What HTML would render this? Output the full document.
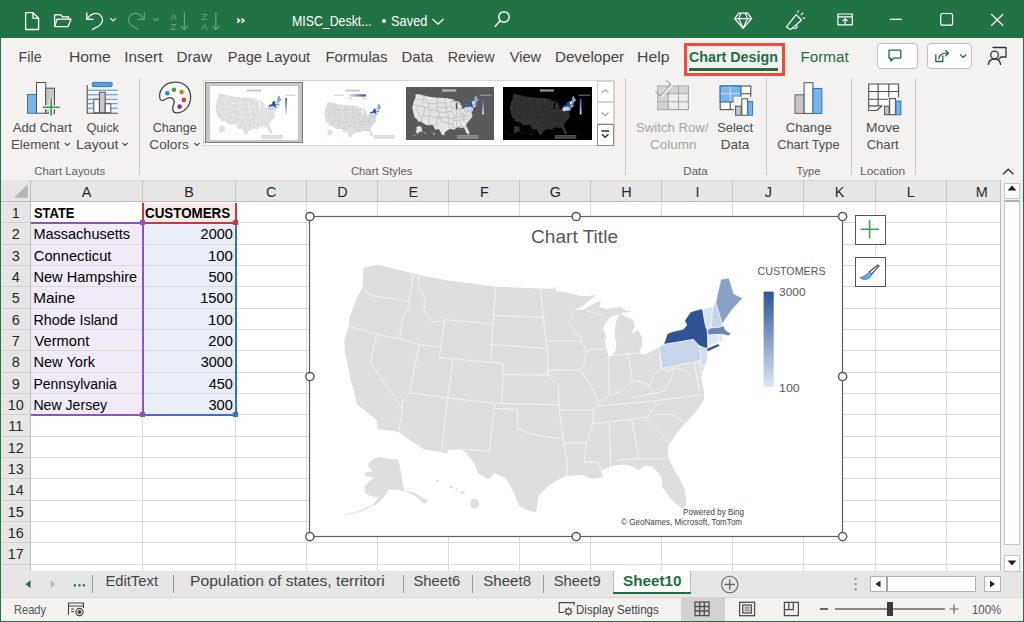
<!DOCTYPE html>
<html><head><meta charset="utf-8"><style>
html,body{margin:0;padding:0;width:1024px;height:622px;overflow:hidden;background:#fff}
body{position:relative;font-family:"Liberation Sans",sans-serif}
.r{position:absolute}
.t{position:absolute;white-space:nowrap;line-height:1;transform-origin:0 0}
</style></head><body>
<div class="r" style="left:0;top:0;width:1024px;height:622px;background:#217346"></div>
<div class="r" style="left:1px;top:38px;width:1022px;height:142px;background:#f3f2f1"></div>
<div class="r" style="left:1px;top:180px;width:1022px;height:391px;background:#fff"></div>
<div class="r" style="left:1px;top:571px;width:1022px;height:26px;background:#e6e6e6"></div>
<div class="r" style="left:1px;top:597px;width:1022px;height:24px;background:#f3f2f1"></div><div class="r" style="left:1px;top:596.8px;width:1022px;height:1px;background:#d6d6d6"></div>

<div class="t" style="left:292.19px;top:15px;font-size:13.8px;font-weight:400;color:#fff;transform:scaleX(0.894);">MISC_Deskt...</div>
<div class="r" style="left:381.5px;top:19px;width:4px;height:4px;border-radius:2px;background:#fff"></div>
<div class="t" style="left:391.12px;top:15px;font-size:13.8px;font-weight:400;color:#fff;transform:scaleX(0.931);">Saved</div>
<div class="t" style="left:18.62px;top:50px;font-size:14.3px;font-weight:400;color:#444;">File</div>
<div class="t" style="left:68.52px;top:49px;font-size:15.5px;font-weight:400;color:#444;transform:scaleX(1.011);">Home</div>
<div class="t" style="left:124.19px;top:49px;font-size:15.3px;font-weight:400;color:#444;">Insert</div>
<div class="t" style="left:176.45px;top:49px;font-size:15.2px;font-weight:400;color:#444;">Draw</div>
<div class="t" style="left:227.69px;top:50px;font-size:14.7px;font-weight:400;color:#444;">Page Layout</div>
<div class="t" style="left:325.38px;top:50px;font-size:14.9px;font-weight:400;color:#444;">Formulas</div>
<div class="t" style="left:401.47px;top:49px;font-size:15.0px;font-weight:400;color:#444;">Data</div>
<div class="t" style="left:447.73px;top:50px;font-size:14.3px;font-weight:400;color:#444;">Review</div>
<div class="t" style="left:509.74px;top:50px;font-size:14.6px;font-weight:400;color:#444;">View</div>
<div class="t" style="left:554.95px;top:49px;font-size:15.2px;font-weight:400;color:#444;">Developer</div>
<div class="t" style="left:637.41px;top:49px;font-size:15.5px;font-weight:400;color:#444;transform:scaleX(1.018);">Help</div>
<div class="t" style="left:688.91px;top:50px;font-size:14.3px;font-weight:700;color:#1e6e42;">Chart Design</div>
<div class="t" style="left:800.55px;top:49px;font-size:15.2px;font-weight:400;color:#1e6e42;">Format</div>
<div class="r" style="left:689px;top:68.3px;width:89px;height:3.2px;background:#1e6e42"></div>
<div class="r" style="left:684px;top:43.2px;width:100.8px;height:32.4px;border:3px solid #ef4b3f;box-sizing:border-box"></div>
<div class="r" style="left:876.8px;top:43.2px;width:41px;height:25.7px;border:1px solid #bdbdbd;border-radius:4px;background:#fff;box-sizing:border-box"></div>
<div class="r" style="left:927.3px;top:43.2px;width:45.2px;height:25.7px;border:1px solid #bdbdbd;border-radius:4px;background:#fff;box-sizing:border-box"></div>
<div class="t" style="left:12.67px;top:121px;font-size:13.2px;font-weight:400;color:#4d4d4d;">Add Chart</div>
<div class="t" style="left:11.01px;top:138px;font-size:13.3px;font-weight:400;color:#4d4d4d;">Element</div>
<div class="t" style="left:86.40px;top:122px;font-size:12.7px;font-weight:400;color:#4d4d4d;">Quick</div>
<div class="t" style="left:75.64px;top:138px;font-size:13.7px;font-weight:400;color:#4d4d4d;transform:scaleX(1.032);">Layout</div>
<div class="t" style="left:152.66px;top:122px;font-size:12.6px;font-weight:400;color:#4d4d4d;">Change</div>
<div class="t" style="left:149.30px;top:138px;font-size:13.7px;font-weight:400;color:#4d4d4d;">Colors</div>
<div class="t" style="left:34.22px;top:166px;font-size:11.4px;font-weight:400;color:#5e5e5e;">Chart Layouts</div>
<div class="t" style="left:350.93px;top:166px;font-size:11.3px;font-weight:400;color:#5e5e5e;">Chart Styles</div>
<div class="t" style="left:636.00px;top:121px;font-size:13.2px;font-weight:400;color:#a6a6a6;">Switch Row/</div>
<div class="t" style="left:650.12px;top:138px;font-size:13.5px;font-weight:400;color:#a6a6a6;">Column</div>
<div class="t" style="left:717.21px;top:122px;font-size:12.9px;font-weight:400;color:#4d4d4d;">Select</div>
<div class="t" style="left:720.68px;top:138px;font-size:13.6px;font-weight:400;color:#4d4d4d;">Data</div>
<div class="t" style="left:683.36px;top:166px;font-size:11.5px;font-weight:400;color:#5e5e5e;">Data</div>
<div class="t" style="left:785.84px;top:121px;font-size:13.1px;font-weight:400;color:#4d4d4d;">Change</div>
<div class="t" style="left:777.15px;top:139px;font-size:12.8px;font-weight:400;color:#4d4d4d;">Chart Type</div>
<div class="t" style="left:796.45px;top:166px;font-size:11.0px;font-weight:400;color:#5e5e5e;">Type</div>
<div class="t" style="left:866.17px;top:121px;font-size:13.7px;font-weight:400;color:#4d4d4d;transform:scaleX(1.007);">Move</div>
<div class="t" style="left:866.64px;top:138px;font-size:13.1px;font-weight:400;color:#4d4d4d;">Chart</div>
<div class="t" style="left:860.42px;top:166px;font-size:11.8px;font-weight:400;color:#5e5e5e;transform:scaleX(1.012);">Location</div>
<div class="r" style="left:138.5px;top:77.5px;width:1px;height:97px;background:#c8c8c8"></div>
<div class="r" style="left:625.1px;top:77.5px;width:1px;height:97px;background:#c8c8c8"></div>
<div class="r" style="left:766.2px;top:77.5px;width:1px;height:97px;background:#c8c8c8"></div>
<div class="r" style="left:851.1px;top:77.5px;width:1px;height:97px;background:#c8c8c8"></div>
<div class="r" style="left:914.5px;top:77.5px;width:1px;height:97px;background:#c8c8c8"></div>
<div class="r" style="left:203.2px;top:80.3px;width:412px;height:66.2px;background:#fff;border:1px solid #d4d4d4;box-sizing:border-box"></div>
<div class="r" style="left:205.4px;top:82px;width:97.4px;height:61.3px;background:#c6c6c6;border:1px solid #7a7a7a;box-sizing:border-box"></div>
<div class="r" style="left:209.7px;top:85.7px;width:88.8px;height:54.3px;background:#fff"></div>
<div class="r" style="left:405.6px;top:86.6px;width:88.8px;height:53.2px;background:#595959"></div>
<div class="r" style="left:503.3px;top:86.6px;width:88.4px;height:53.2px;background:#000"></div>
<div class="r" style="left:597.3px;top:80.6px;width:16.7px;height:21.6px;border:1px solid #d4d4d4;box-sizing:border-box;background:#fff"></div>
<div class="r" style="left:597.3px;top:102px;width:16.7px;height:22px;border:1px solid #d4d4d4;box-sizing:border-box;background:#fff"></div>
<div class="r" style="left:597.3px;top:124px;width:16.7px;height:22.4px;border:1px solid #8a8a8a;box-sizing:border-box;background:#fff"></div>
<div class="r" style="left:1px;top:180px;width:1022px;height:21.5px;background:linear-gradient(#d8d8d8,#e6e6e6 2px,#e6e6e6)"></div>
<div class="r" style="left:1px;top:180px;width:29.5px;height:391px;background:#e6e6e6"></div>
<div class="r" style="left:30.5px;top:222.33px;width:970px;height:1px;background:#dadada"></div>
<div class="r" style="left:1px;top:222.33px;width:29.5px;height:1px;background:#d0d0d0"></div>
<div class="r" style="left:30.5px;top:243.67px;width:970px;height:1px;background:#dadada"></div>
<div class="r" style="left:1px;top:243.67px;width:29.5px;height:1px;background:#d0d0d0"></div>
<div class="r" style="left:30.5px;top:265.00px;width:970px;height:1px;background:#dadada"></div>
<div class="r" style="left:1px;top:265.00px;width:29.5px;height:1px;background:#d0d0d0"></div>
<div class="r" style="left:30.5px;top:286.33px;width:970px;height:1px;background:#dadada"></div>
<div class="r" style="left:1px;top:286.33px;width:29.5px;height:1px;background:#d0d0d0"></div>
<div class="r" style="left:30.5px;top:307.66px;width:970px;height:1px;background:#dadada"></div>
<div class="r" style="left:1px;top:307.66px;width:29.5px;height:1px;background:#d0d0d0"></div>
<div class="r" style="left:30.5px;top:329.00px;width:970px;height:1px;background:#dadada"></div>
<div class="r" style="left:1px;top:329.00px;width:29.5px;height:1px;background:#d0d0d0"></div>
<div class="r" style="left:30.5px;top:350.33px;width:970px;height:1px;background:#dadada"></div>
<div class="r" style="left:1px;top:350.33px;width:29.5px;height:1px;background:#d0d0d0"></div>
<div class="r" style="left:30.5px;top:371.66px;width:970px;height:1px;background:#dadada"></div>
<div class="r" style="left:1px;top:371.66px;width:29.5px;height:1px;background:#d0d0d0"></div>
<div class="r" style="left:30.5px;top:393.00px;width:970px;height:1px;background:#dadada"></div>
<div class="r" style="left:1px;top:393.00px;width:29.5px;height:1px;background:#d0d0d0"></div>
<div class="r" style="left:30.5px;top:414.33px;width:970px;height:1px;background:#dadada"></div>
<div class="r" style="left:1px;top:414.33px;width:29.5px;height:1px;background:#d0d0d0"></div>
<div class="r" style="left:30.5px;top:435.66px;width:970px;height:1px;background:#dadada"></div>
<div class="r" style="left:1px;top:435.66px;width:29.5px;height:1px;background:#d0d0d0"></div>
<div class="r" style="left:30.5px;top:457.00px;width:970px;height:1px;background:#dadada"></div>
<div class="r" style="left:1px;top:457.00px;width:29.5px;height:1px;background:#d0d0d0"></div>
<div class="r" style="left:30.5px;top:478.33px;width:970px;height:1px;background:#dadada"></div>
<div class="r" style="left:1px;top:478.33px;width:29.5px;height:1px;background:#d0d0d0"></div>
<div class="r" style="left:30.5px;top:499.66px;width:970px;height:1px;background:#dadada"></div>
<div class="r" style="left:1px;top:499.66px;width:29.5px;height:1px;background:#d0d0d0"></div>
<div class="r" style="left:30.5px;top:521.00px;width:970px;height:1px;background:#dadada"></div>
<div class="r" style="left:1px;top:521.00px;width:29.5px;height:1px;background:#d0d0d0"></div>
<div class="r" style="left:30.5px;top:542.33px;width:970px;height:1px;background:#dadada"></div>
<div class="r" style="left:1px;top:542.33px;width:29.5px;height:1px;background:#d0d0d0"></div>
<div class="r" style="left:30.5px;top:563.66px;width:970px;height:1px;background:#dadada"></div>
<div class="r" style="left:1px;top:563.66px;width:29.5px;height:1px;background:#d0d0d0"></div>
<div class="r" style="left:142.00px;top:201.5px;width:1px;height:370px;background:#dadada"></div>
<div class="r" style="left:142.00px;top:180px;width:1px;height:21.5px;background:#c6c6c6"></div>
<div class="r" style="left:235.00px;top:201.5px;width:1px;height:370px;background:#dadada"></div>
<div class="r" style="left:235.00px;top:180px;width:1px;height:21.5px;background:#c6c6c6"></div>
<div class="r" style="left:306.30px;top:201.5px;width:1px;height:370px;background:#dadada"></div>
<div class="r" style="left:306.30px;top:180px;width:1px;height:21.5px;background:#c6c6c6"></div>
<div class="r" style="left:377.40px;top:201.5px;width:1px;height:370px;background:#dadada"></div>
<div class="r" style="left:377.40px;top:180px;width:1px;height:21.5px;background:#c6c6c6"></div>
<div class="r" style="left:448.40px;top:201.5px;width:1px;height:370px;background:#dadada"></div>
<div class="r" style="left:448.40px;top:180px;width:1px;height:21.5px;background:#c6c6c6"></div>
<div class="r" style="left:519.40px;top:201.5px;width:1px;height:370px;background:#dadada"></div>
<div class="r" style="left:519.40px;top:180px;width:1px;height:21.5px;background:#c6c6c6"></div>
<div class="r" style="left:590.40px;top:201.5px;width:1px;height:370px;background:#dadada"></div>
<div class="r" style="left:590.40px;top:180px;width:1px;height:21.5px;background:#c6c6c6"></div>
<div class="r" style="left:661.40px;top:201.5px;width:1px;height:370px;background:#dadada"></div>
<div class="r" style="left:661.40px;top:180px;width:1px;height:21.5px;background:#c6c6c6"></div>
<div class="r" style="left:732.40px;top:201.5px;width:1px;height:370px;background:#dadada"></div>
<div class="r" style="left:732.40px;top:180px;width:1px;height:21.5px;background:#c6c6c6"></div>
<div class="r" style="left:803.40px;top:201.5px;width:1px;height:370px;background:#dadada"></div>
<div class="r" style="left:803.40px;top:180px;width:1px;height:21.5px;background:#c6c6c6"></div>
<div class="r" style="left:874.90px;top:201.5px;width:1px;height:370px;background:#dadada"></div>
<div class="r" style="left:874.90px;top:180px;width:1px;height:21.5px;background:#c6c6c6"></div>
<div class="r" style="left:945.80px;top:201.5px;width:1px;height:370px;background:#dadada"></div>
<div class="r" style="left:945.80px;top:180px;width:1px;height:21.5px;background:#c6c6c6"></div>
<div class="r" style="left:1px;top:201px;width:1000px;height:1px;background:#bdbdbd"></div>
<div class="r" style="left:30px;top:180px;width:1px;height:391px;background:#bdbdbd"></div>
<div class="r" style="left:1000.2px;top:180px;width:1px;height:391px;background:#bdbdbd"></div>
<div class="r" style="left:1px;top:570.8px;width:1000px;height:1px;background:#b4b4b4"></div>
<svg class="r" style="left:0;top:0" width="1024" height="622"><polygon points="27.8,184.2 27.8,197.7 13.9,197.7" fill="#b4b4b4"/></svg>
<div class="t" style="left:30.5px;width:112.0px;top:185px;font-size:14.4px;text-align:center;color:#262626">A</div>
<div class="t" style="left:142.5px;width:93.0px;top:185px;font-size:14.4px;text-align:center;color:#262626">B</div>
<div class="t" style="left:235.5px;width:71.3px;top:185px;font-size:14.4px;text-align:center;color:#262626">C</div>
<div class="t" style="left:306.8px;width:71.1px;top:185px;font-size:14.4px;text-align:center;color:#262626">D</div>
<div class="t" style="left:377.9px;width:71.0px;top:185px;font-size:14.4px;text-align:center;color:#262626">E</div>
<div class="t" style="left:448.9px;width:71.0px;top:185px;font-size:14.4px;text-align:center;color:#262626">F</div>
<div class="t" style="left:519.9px;width:71.0px;top:185px;font-size:14.4px;text-align:center;color:#262626">G</div>
<div class="t" style="left:590.9px;width:71.0px;top:185px;font-size:14.4px;text-align:center;color:#262626">H</div>
<div class="t" style="left:661.9px;width:71.0px;top:185px;font-size:14.4px;text-align:center;color:#262626">I</div>
<div class="t" style="left:732.9px;width:71.0px;top:185px;font-size:14.4px;text-align:center;color:#262626">J</div>
<div class="t" style="left:803.9px;width:71.5px;top:185px;font-size:14.4px;text-align:center;color:#262626">K</div>
<div class="t" style="left:875.4px;width:70.9px;top:185px;font-size:14.4px;text-align:center;color:#262626">L</div>
<div class="t" style="left:946.3px;width:70.7px;top:185px;font-size:14.4px;text-align:center;color:#262626">M</div>
<div class="t" style="left:1px;width:29.5px;top:206px;font-size:14.4px;text-align:center;color:#262626">1</div>
<div class="t" style="left:1px;width:29.5px;top:227px;font-size:14.4px;text-align:center;color:#262626">2</div>
<div class="t" style="left:1px;width:29.5px;top:249px;font-size:14.4px;text-align:center;color:#262626">3</div>
<div class="t" style="left:1px;width:29.5px;top:270px;font-size:14.4px;text-align:center;color:#262626">4</div>
<div class="t" style="left:1px;width:29.5px;top:291px;font-size:14.4px;text-align:center;color:#262626">5</div>
<div class="t" style="left:1px;width:29.5px;top:313px;font-size:14.4px;text-align:center;color:#262626">6</div>
<div class="t" style="left:1px;width:29.5px;top:334px;font-size:14.4px;text-align:center;color:#262626">7</div>
<div class="t" style="left:1px;width:29.5px;top:355px;font-size:14.4px;text-align:center;color:#262626">8</div>
<div class="t" style="left:1px;width:29.5px;top:377px;font-size:14.4px;text-align:center;color:#262626">9</div>
<div class="t" style="left:1px;width:29.5px;top:398px;font-size:14.4px;text-align:center;color:#262626">10</div>
<div class="t" style="left:1px;width:29.5px;top:419px;font-size:14.4px;text-align:center;color:#262626">11</div>
<div class="t" style="left:1px;width:29.5px;top:441px;font-size:14.4px;text-align:center;color:#262626">12</div>
<div class="t" style="left:1px;width:29.5px;top:462px;font-size:14.4px;text-align:center;color:#262626">13</div>
<div class="t" style="left:1px;width:29.5px;top:483px;font-size:14.4px;text-align:center;color:#262626">14</div>
<div class="t" style="left:1px;width:29.5px;top:505px;font-size:14.4px;text-align:center;color:#262626">15</div>
<div class="t" style="left:1px;width:29.5px;top:526px;font-size:14.4px;text-align:center;color:#262626">16</div>
<div class="t" style="left:1px;width:29.5px;top:547px;font-size:14.4px;text-align:center;color:#262626">17</div>
<div class="t" style="left:1px;width:29.5px;top:569px;font-size:14.4px;text-align:center;color:#262626">18</div>
<div class="r" style="left:143px;top:202.5px;width:92.5px;height:20px;background:#f9eaea"></div>
<div class="r" style="left:31px;top:222.5px;width:111.5px;height:192.0px;background:#f0ebf7"></div>
<div class="r" style="left:143px;top:222.5px;width:92.5px;height:192.0px;background:#e9eef8"></div>
<div class="r" style="left:30.5px;top:243.67px;width:205px;height:1px;background:#dadada"></div>
<div class="r" style="left:30.5px;top:265.00px;width:205px;height:1px;background:#dadada"></div>
<div class="r" style="left:30.5px;top:286.33px;width:205px;height:1px;background:#dadada"></div>
<div class="r" style="left:30.5px;top:307.66px;width:205px;height:1px;background:#dadada"></div>
<div class="r" style="left:30.5px;top:329.00px;width:205px;height:1px;background:#dadada"></div>
<div class="r" style="left:30.5px;top:350.33px;width:205px;height:1px;background:#dadada"></div>
<div class="r" style="left:30.5px;top:371.66px;width:205px;height:1px;background:#dadada"></div>
<div class="r" style="left:30.5px;top:393.00px;width:205px;height:1px;background:#dadada"></div>
<div class="t" style="left:33.53px;top:207px;font-size:13.8px;font-weight:700;color:#000;transform:scaleX(0.935);">STATE</div>
<div class="t" style="left:145.45px;top:207px;font-size:13.8px;font-weight:700;color:#000;transform:scaleX(0.969);">CUSTOMERS</div>
<div class="t" style="left:33.41px;top:227px;font-size:14.5px;font-weight:400;color:#000;">Massachusetts</div>
<div class="t" style="left:200.57px;top:227px;font-size:14.5px;font-weight:400;color:#000;">2000</div>
<div class="t" style="left:33.85px;top:249px;font-size:14.7px;font-weight:400;color:#000;">Connecticut</div>
<div class="t" style="left:207.91px;top:248px;font-size:15.0px;font-weight:400;color:#000;">100</div>
<div class="t" style="left:33.40px;top:270px;font-size:14.6px;font-weight:400;color:#000;">New Hampshire</div>
<div class="t" style="left:208.46px;top:270px;font-size:14.6px;font-weight:400;color:#000;">500</div>
<div class="t" style="left:33.34px;top:290px;font-size:15.3px;font-weight:400;color:#000;">Maine</div>
<div class="t" style="left:200.18px;top:291px;font-size:14.7px;font-weight:400;color:#000;">1500</div>
<div class="t" style="left:33.43px;top:313px;font-size:14.3px;font-weight:400;color:#000;">Rhode Island</div>
<div class="t" style="left:207.91px;top:312px;font-size:15.0px;font-weight:400;color:#000;">100</div>
<div class="t" style="left:34.54px;top:334px;font-size:14.7px;font-weight:400;color:#000;">Vermont</div>
<div class="t" style="left:208.31px;top:334px;font-size:14.7px;font-weight:400;color:#000;">200</div>
<div class="t" style="left:33.40px;top:355px;font-size:14.6px;font-weight:400;color:#000;">New York</div>
<div class="t" style="left:200.75px;top:355px;font-size:14.4px;font-weight:400;color:#000;">3000</div>
<div class="t" style="left:33.45px;top:377px;font-size:14.0px;font-weight:400;color:#000;">Pennsylvania</div>
<div class="t" style="left:208.72px;top:377px;font-size:14.5px;font-weight:400;color:#000;">450</div>
<div class="t" style="left:33.44px;top:398px;font-size:14.1px;font-weight:400;color:#000;">New Jersey</div>
<div class="t" style="left:208.49px;top:398px;font-size:14.6px;font-weight:400;color:#000;">300</div>
<div class="r" style="left:141.5px;top:202.5px;width:2px;height:21.3px;background:#c53a3f"></div>
<div class="r" style="left:234.7px;top:202.5px;width:2px;height:21.3px;background:#c53a3f"></div>
<div class="r" style="left:143px;top:221.8px;width:92px;height:2px;background:#c53a3f"></div>
<div class="r" style="left:31px;top:221.8px;width:111px;height:2px;background:#8855c4"></div>
<div class="r" style="left:31px;top:413.8px;width:111px;height:2px;background:#8855c4"></div>
<div class="r" style="left:141.5px;top:222.8px;width:2px;height:192.0px;background:#8855c4"></div>
<div class="r" style="left:143.5px;top:413.8px;width:92px;height:2px;background:#3a6fd0"></div>
<div class="r" style="left:234.7px;top:223.8px;width:2px;height:192.0px;background:#3a6fd0"></div>
<div class="r" style="left:140.0px;top:220.3px;width:5px;height:5px;background:#8855c4"></div>
<div class="r" style="left:233.2px;top:220.3px;width:5px;height:5px;background:#c53a3f"></div>
<div class="r" style="left:140.0px;top:412.3px;width:5px;height:5px;background:#8855c4"></div>
<div class="r" style="left:233.2px;top:412.3px;width:5px;height:5px;background:#3a6fd0"></div>
<div class="r" style="left:1001px;top:180px;width:21px;height:391px;background:#f0f0f0"></div>
<div class="r" style="left:1003.9px;top:182.5px;width:16.1px;height:16.1px;background:#fff;border:1px solid #c8c8c8;box-sizing:border-box"></div>
<div class="r" style="left:1003.9px;top:199.5px;width:16.1px;height:345px;background:#fff;border:1px solid #c8c8c8;border-top:2px solid #b0b0b0;box-sizing:border-box"></div>
<div class="r" style="left:1003.5px;top:555px;width:16.5px;height:16.7px;background:#fff;border:1px solid #c8c8c8;box-sizing:border-box"></div>
<div class="r" style="left:309.5px;top:216.5px;width:533px;height:320px;background:#fff"></div>
<svg class="r" style="left:0;top:0" width="1024" height="622" viewBox="0 0 1024 622"><defs><path id="us48" d="M363.4,267.5 L377.6,264.4 L413.1,273.6 L444.5,280.1 L495.7,286.8 L540.0,288.4 L554.0,288.8 L555.0,285.7 L556.1,290.9 L565.0,292.2 L570.1,292.9 L580.4,296.1 L588.1,296.1 L595.8,295.2 L589.4,300.6 L581.7,307.0 L573.4,310.2 L583.0,309.6 L586.9,307.6 L597.1,301.9 L601.0,301.2 L599.1,307.0 L606.1,308.9 L620.3,307.0 L626.7,310.8 L631.8,311.5 L631.8,312.1 L622.8,312.8 L616.4,315.3 L610.0,317.3 L606.1,322.4 L602.9,328.8 L604.8,331.4 L606.1,336.6 L604.8,341.7 L607.4,352.0 L608.7,357.1 L615.1,352.0 L616.4,344.3 L614.5,334.0 L615.8,322.4 L619.0,314.7 L621.6,314.1 L624.1,316.0 L633.1,319.8 L635.0,326.3 L631.8,334.0 L638.3,330.1 L642.1,337.8 L642.1,345.6 L638.3,353.3 L644.7,354.6 L655.0,349.4 L658.8,346.8 L663.7,344.5 L667.4,333.7 L673.2,331.5 L683.3,329.3 L686.9,325.0 L684.7,320.7 L690.5,312.0 L700.7,309.1 L702.8,308.8 L713.0,306.9 L715.8,302.6 L720.9,279.4 L728.9,278.0 L733.9,293.9 L742.6,298.2 L732.5,309.1 L725.3,319.2 L722.4,324.3 L723.8,325.7 L725.3,330.1 L731.0,333.7 L728.9,335.8 L722.4,334.6 L722.4,340.9 L718.7,342.4 L707.9,346.0 L707.2,348.9 L707.6,359.0 L704.0,366.9 L701.1,377.8 L704.0,390.8 L703.9,400.0 L696.5,411.1 L685.5,423.1 L679.0,430.0 L674.4,437.0 L668.8,444.4 L667.9,453.6 L669.7,461.0 L676.2,473.9 L679.0,477.6 L684.5,488.7 L686.4,499.8 L685.5,506.3 L681.8,508.1 L674.4,502.6 L668.8,496.1 L662.3,486.9 L661.4,477.6 L657.7,472.1 L652.2,466.5 L644.8,465.6 L638.3,470.2 L630.0,465.6 L622.0,464.4 L613.6,465.5 L601.0,470.7 L603.1,477.0 L592.7,479.0 L582.2,474.9 L566.6,475.9 L557.2,480.1 L546.7,487.4 L538.4,495.8 L536.3,510.4 L535.3,512.3 L527.0,510.0 L519.7,506.4 L513.5,492.0 L505.1,477.4 L494.6,473.2 L488.4,479.5 L477.9,473.2 L473.8,462.8 L465.4,452.3 L461.2,449.2 L447.6,450.2 L447.6,453.4 L423.6,449.2 L397.5,431.4 L377.6,429.3 L376.6,419.9 L367.2,412.6 L356.7,404.3 L354.6,393.8 L349.4,375.0 L348.4,367.9 L345.2,353.2 L344.2,340.7 L348.8,326.0 L349.4,317.7 L356.0,300.0 L362.6,287.4Z"/><path id="ak" d="M368.1,464.1 L373.2,459.0 L380.5,456.7 L388.4,459.0 L398.5,459.6 L404.1,489.9 L407.5,491.6 L414.2,492.7 L427.7,500.6 L424.4,504.0 L414.2,495.0 L405.2,491.6 L396.2,489.4 L392.9,489.9 L389.5,489.4 L387.2,492.7 L382.7,498.4 L377.1,504.0 L365.9,509.6 L353.5,514.1 L342.2,514.7 L355.7,512.4 L372.6,505.1 L378.8,497.2 L370.4,496.1 L365.3,492.7 L364.7,486.0 L368.1,482.6 L373.7,477.6 L364.7,475.9 L364.7,472.5 L372.6,471.4 L368.1,465.7Z"/><g id="hi"><ellipse cx="437.7" cy="481" rx="1.4" ry="1.0"/><ellipse cx="451.3" cy="486.9" rx="1.8" ry="1.2"/><ellipse cx="456.5" cy="489.2" rx="1.3" ry="0.9"/><ellipse cx="462.5" cy="492.5" rx="2.4" ry="1.3"/><ellipse cx="474.6" cy="503.8" rx="4.4" ry="5.0"/></g><g id="bd" fill="none"><polyline points="363.0,287.4 370.3,295.8 394.3,298.5 409.0,302.0"/><polyline points="413.1,273.6 409.0,302.0"/><polyline points="409.0,302.0 410.0,306.2 402.7,316.7 399.6,338.6"/><polyline points="419.4,274.9 417.7,284.3 425.7,300.0 423.6,309.3 432.0,321.9 444.5,320.8"/><polyline points="348.8,326.0 376.6,334.4 399.6,338.6 419.4,344.4 439.3,347.0"/><polyline points="444.5,319.5 439.3,357.4"/><polyline points="444.5,319.5 492.6,324.0"/><polyline points="495.7,286.8 490.5,362.6"/><polyline points="493.6,315.6 540.0,317.3 545.0,317.6"/><polyline points="490.5,344.4 540.0,348.0 547.5,349.0"/><polyline points="439.3,357.4 504.0,363.7"/><polyline points="503.0,363.7 502.0,404.0"/><polyline points="503.0,374.5 551.0,375.0"/><polyline points="376.6,334.4 370.3,362.6 385.0,383.5 402.2,408.4"/><polyline points="410.0,392.8 402.7,400.1 401.7,416.8 398.5,430.4"/><polyline points="419.4,344.4 411.0,384.6 410.0,392.8"/><polyline points="410.0,392.8 447.6,398.0"/><polyline points="452.9,359.5 449.7,384.6 447.6,398.0"/><polyline points="447.6,398.0 441.4,452.3"/><polyline points="447.6,398.0 494.6,403.2 539.6,404.3 559.0,404.9"/><polyline points="494.6,403.2 489.4,451.3 461.2,449.2"/><polyline points="494.6,408.4 517.6,409.5 517.6,428.3 530.0,434.1 548.0,437.0 563.4,438.9"/><polyline points="540.4,288.8 545.7,341.0"/><polyline points="545.7,341.0 581.2,341.0"/><polyline points="547.8,370.3 580.2,370.0"/><polyline points="545.7,341.0 547.8,350.0 547.8,375.0 551.0,378.0 558.2,385.0 559.3,410.1"/><polyline points="559.3,410.1 593.7,410.1"/><polyline points="559.3,410.1 563.4,438.9 567.6,464.4 566.6,475.9"/><polyline points="563.4,443.1 586.4,443.1"/><polyline points="599.0,405.9 593.7,410.1 592.7,423.7 586.4,443.1 584.3,462.3 599.0,462.3 601.0,470.7"/><polyline points="573.4,310.2 570.1,318.6 568.9,322.4 576.6,334.0 581.7,337.8 581.7,343.0 584.0,346.0 586.4,350.5 584.0,365.0 580.2,370.0 590.6,385.0 596.0,396.0 599.0,405.9"/><polyline points="586.2,310.8 601.0,314.7 604.8,322.4"/><polyline points="588.1,349.4 606.1,348.8"/><polyline points="608.4,355.7 609.4,395.4 601.0,401.7"/><polyline points="609.4,395.4 622.0,391.3 632.4,380.8"/><polyline points="628.2,353.6 632.4,380.8"/><polyline points="632.4,380.8 641.7,382.1 649.0,386.5 653.0,376.0 660.6,368.2"/><polyline points="608.7,355.8 637.0,353.3"/><polyline points="659.6,348.4 660.6,368.2"/><polyline points="662.0,368.4 699.3,360.9"/><polyline points="662.0,368.4 667.8,372.0 675.0,367.6 670.7,379.2 664.9,390.8 654.7,393.7 649.0,386.5"/><polyline points="675.0,367.6 685.0,371.0 692.4,376.3"/><polyline points="699.3,360.9 700.5,372.0 704.0,372.0"/><polyline points="695.3,363.5 696.0,373.4 698.2,385.0 700.3,390.8"/><polyline points="696.0,373.4 698.5,380.0"/><polyline points="599.0,405.9 647.0,401.7 701.1,395.1"/><polyline points="632.0,398.0 653.3,393.4 654.7,393.7"/><polyline points="592.7,423.7 647.0,417.4 657.5,402.8"/><polyline points="609.4,422.6 610.5,466.5"/><polyline points="631.8,420.3 639.2,459.1"/><polyline points="616.7,460.2 630.0,459.1 663.3,458.8 667.9,457.3"/><polyline points="647.6,420.3 655.9,414.8 665.1,413.9 675.3,415.7 685.5,423.1"/><polyline points="647.6,420.3 669.7,443.4"/></g><g id="ne"><path d="M663.7,344.5 L667.4,333.7 L673.2,331.5 L683.3,329.3 L686.9,325.0 L684.7,320.7 L690.5,312.0 L700.7,309.1 L702.8,309.8 L704.3,319.2 L705.7,326.4 L707.2,330.8 L707.9,345.3 L707.2,348.4 L718.0,343.8 L720.2,345.8 L708.0,351.6 L705.0,349.5 L697.8,344.5 L693.4,339.5Z" fill="#2f5496"/><path d="M659.1,346.6 L663.7,344.5 L693.4,339.5 L698.5,345.5 L700.5,352.0 L701.1,358.2 L699.3,360.9 L662.0,368.4Z" fill="#c8d4e9"/><path d="M698.5,345.5 L706.9,348.5 L707.6,359.0 L704.0,366.9 L700.3,361.1 L701.1,358.2 L700.5,352.0Z" fill="#d1dcee"/><path d="M702.8,308.8 L713.0,306.9 L712.2,313.4 L711.5,325.0 L707.9,327.9 L705.7,326.4 L704.3,319.2Z" fill="#d7e1f1"/><path d="M713.0,306.9 L715.8,302.6 L722.4,324.3 L719.5,327.2 L711.5,327.9 L711.5,325.0 L712.2,313.4Z" fill="#c5d2e7"/><path d="M715.8,302.6 L720.9,279.4 L728.9,278.0 L733.9,293.9 L742.6,298.2 L732.5,309.1 L725.3,319.2 L722.4,324.3Z" fill="#89a0c7"/><path d="M707.9,329.3 L711.5,327.9 L719.5,327.2 L723.8,325.7 L725.3,330.1 L731.0,333.7 L728.9,335.8 L722.4,334.4 L707.9,335.1Z" fill="#6b86b6"/><path d="M707.9,335.1 L718.0,334.4 L718.7,342.4 L707.9,346.0Z" fill="#dde6f4"/><path d="M718.0,334.4 L722.4,334.4 L722.4,340.9 L718.7,342.4Z" fill="#dde6f4"/></g></defs><g fill="#dedede"><use href="#us48"/><use href="#ak"/><use href="#hi"/></g><use href="#bd" stroke="#fbfbfb" stroke-width="0.75"/><use href="#ne" stroke="#ffffff" stroke-width="0.6"/><defs><linearGradient id="lg" x1="0" y1="0" x2="0" y2="1"><stop offset="0" stop-color="#2f5496"/><stop offset="1" stop-color="#dde6f4"/></linearGradient></defs><rect x="763.6" y="291.6" width="10.1" height="95.4" fill="url(#lg)"/><rect x="309.5" y="216.5" width="533" height="320" fill="none" stroke="#606060" stroke-width="1.2"/><circle cx="309.9" cy="216.5" r="4.1" fill="#fff" stroke="#5a5a5a" stroke-width="1.5"/><circle cx="309.9" cy="376.5" r="4.1" fill="#fff" stroke="#5a5a5a" stroke-width="1.5"/><circle cx="309.9" cy="536.6" r="4.1" fill="#fff" stroke="#5a5a5a" stroke-width="1.5"/><circle cx="576.2" cy="216.5" r="4.1" fill="#fff" stroke="#5a5a5a" stroke-width="1.5"/><circle cx="576.2" cy="536.6" r="4.1" fill="#fff" stroke="#5a5a5a" stroke-width="1.5"/><circle cx="842.6" cy="216.5" r="4.1" fill="#fff" stroke="#5a5a5a" stroke-width="1.5"/><circle cx="842.6" cy="376.5" r="4.1" fill="#fff" stroke="#5a5a5a" stroke-width="1.5"/><circle cx="842.6" cy="536.6" r="4.1" fill="#fff" stroke="#5a5a5a" stroke-width="1.5"/><g transform="translate(158.0,49.5) scale(0.1666)"><g fill="#dedede"><use href="#us48"/><use href="#ak"/><use href="#hi"/></g><use href="#bd" stroke="#fff" stroke-width="2"/><use href="#ne"/><rect x="763.6" y="291.6" width="10.1" height="95.4" fill="url(#lg)"/></g><g transform="translate(275.1,64.3) scale(0.143)"><g fill="#dedede"><use href="#us48"/><use href="#ak"/><use href="#hi"/></g><use href="#bd" stroke="#b8b8b8" stroke-width="2.2"/><use href="#ne"/></g><defs><linearGradient id="lgh" x1="0" y1="0" x2="1" y2="0"><stop offset="0" stop-color="#dde6f4"/><stop offset="1" stop-color="#2f5496"/></linearGradient></defs><rect x="348.4" y="94.2" width="17.4" height="2.4" fill="url(#lgh)"/><rect x="246.9" y="89.6" width="14.4" height="1.8" fill="#666" opacity="0.4"/><rect x="285" y="94.6" width="10.5" height="1.2" fill="#888" opacity="0.35"/><rect x="261.3" y="135.2" width="21.5" height="1.4" fill="#777" opacity="0.35"/><rect x="261.3" y="137.2" width="21.5" height="1.4" fill="#777" opacity="0.35"/><rect x="345.5" y="89.6" width="14.4" height="1.8" fill="#666" opacity="0.4"/><rect x="334" y="94.6" width="10" height="1.2" fill="#888" opacity="0.35"/><rect x="348" y="98" width="4" height="1.2" fill="#888" opacity="0.3"/><rect x="362" y="98" width="4" height="1.2" fill="#888" opacity="0.3"/><rect x="374.2" y="135.2" width="20.4" height="1.4" fill="#777" opacity="0.35"/><rect x="374.2" y="137.2" width="20.4" height="1.4" fill="#777" opacity="0.35"/><rect x="442" y="89.3" width="14.3" height="2.4" fill="#fff" opacity="0.55"/><rect x="479.6" y="94.6" width="11.8" height="1.2" fill="#fff" opacity="0.4"/><rect x="457" y="135.2" width="21.5" height="1.4" fill="#fff" opacity="0.4"/><rect x="457" y="137.2" width="21.5" height="1.4" fill="#fff" opacity="0.4"/><rect x="539.8" y="89.3" width="14" height="2.4" fill="#fff" opacity="0.55"/><rect x="578.5" y="94.6" width="11.8" height="1.2" fill="#fff" opacity="0.4"/><rect x="554.8" y="135.2" width="21.5" height="1.4" fill="#fff" opacity="0.4"/><rect x="554.8" y="137.2" width="21.5" height="1.4" fill="#fff" opacity="0.4"/><g transform="translate(355.0,50.0) scale(0.1666)"><g fill="#e4e4e4"><use href="#us48"/><use href="#ak"/><use href="#hi"/></g><use href="#bd" stroke="#8a8a8a" stroke-width="2"/><use href="#ne"/><rect x="763.6" y="291.6" width="10.1" height="95.4" fill="url(#lg)"/></g><g transform="translate(452.6,50.0) scale(0.1666)"><g fill="#333333"><use href="#us48"/><use href="#ak"/><use href="#hi"/></g><use href="#bd" stroke="#1a1a1a" stroke-width="2"/><use href="#ne"/><rect x="763.6" y="291.6" width="10.1" height="95.4" fill="url(#lg)"/></g></svg>
<div class="t" style="left:531.03px;top:227px;font-size:19.1px;font-weight:400;color:#595959;">Chart Title</div>
<div class="t" style="left:757.46px;top:266px;font-size:10.7px;font-weight:400;color:#595959;">CUSTOMERS</div>
<div class="t" style="left:779.34px;top:287px;font-size:11.8px;font-weight:400;color:#595959;transform:scaleX(1.014);">3000</div>
<div class="t" style="left:778.86px;top:383px;font-size:11.8px;font-weight:400;color:#595959;transform:scaleX(1.048);">100</div>
<div class="t" style="left:683.34px;top:509px;font-size:8.2px;font-weight:400;color:#404040;transform:scaleX(0.987);">Powered by Bing</div>
<div class="t" style="left:621.38px;top:519px;font-size:8.2px;font-weight:400;color:#404040;transform:scaleX(0.986);">© GeoNames, Microsoft, TomTom</div>
<div class="r" style="left:855.1px;top:215.1px;width:31px;height:30.4px;background:#fff;border:1px solid #555;box-sizing:border-box"></div>
<div class="r" style="left:855.1px;top:257.1px;width:31px;height:30.4px;background:#fff;border:1px solid #555;box-sizing:border-box"></div>
<svg class="r" style="left:0;top:0" width="1024" height="622"><path d="M860.6,229.3H879M869.6,220.2V238.6" stroke="#3aa757" stroke-width="1.6"/></svg>
<div class="r" style="left:1px;top:571.3px;width:1000px;height:25.7px;background:#e6e6e6"></div>
<svg class="r" style="left:0;top:0" width="1024" height="622"><polygon points="30.5,580.3 30.5,588 25.4,584.2" fill="#1e6e42"/><polygon points="50.8,580.3 50.8,588 55.3,584.2" fill="#b8b8b8"/></svg>
<svg class="r" style="left:0;top:0" width="1024" height="622"><rect x="73.8" y="584.2" width="2.2" height="2.2" fill="#1e6e42"/><rect x="78.3" y="584.2" width="2.2" height="2.2" fill="#1e6e42"/><rect x="82.8" y="584.2" width="2.2" height="2.2" fill="#1e6e42"/></svg>
<div class="r" style="left:92.1px;top:575px;width:1px;height:18px;background:#9a9a9a"></div>
<div class="r" style="left:172.9px;top:575px;width:1px;height:18px;background:#9a9a9a"></div>
<div class="r" style="left:402.5px;top:575px;width:1px;height:18px;background:#9a9a9a"></div>
<div class="r" style="left:472.3px;top:575px;width:1px;height:18px;background:#9a9a9a"></div>
<div class="r" style="left:542.8px;top:575px;width:1px;height:18px;background:#9a9a9a"></div>
<div class="t" style="left:105.39px;top:574px;font-size:14.8px;font-weight:400;color:#444;">EditText</div>
<div class="t" style="left:190.32px;top:573px;font-size:15.5px;font-weight:400;color:#444;transform:scaleX(1.009);">Population of states, territori</div>
<div class="t" style="left:413.43px;top:574px;font-size:14.8px;font-weight:400;color:#444;">Sheet6</div>
<div class="t" style="left:483.22px;top:573px;font-size:15.1px;font-weight:400;color:#444;">Sheet8</div>
<div class="t" style="left:553.73px;top:574px;font-size:14.8px;font-weight:400;color:#444;">Sheet9</div>
<div class="r" style="left:613.3px;top:571.2px;width:78px;height:22.8px;background:#fff;border-left:1px solid #bdbdbd;border-right:1px solid #bdbdbd;box-sizing:border-box"></div>
<div class="r" style="left:613.3px;top:592.4px;width:78px;height:2px;background:#1e6e42"></div>
<div class="t" style="left:622.96px;top:573px;font-size:15.3px;font-weight:700;color:#1e6e42;">Sheet10</div>
<svg class="r" style="left:0;top:0" width="1024" height="622"><circle cx="729.7" cy="584.5" r="8.2" fill="none" stroke="#666" stroke-width="1.1"/><path d="M724.5,584.5H734.9M729.7,579.3V589.7" stroke="#666" stroke-width="1.3"/></svg>
<div class="r" style="left:870px;top:576px;width:16.6px;height:16px;background:#fff;border:1px solid #b4b4b4;box-sizing:border-box"></div>
<div class="r" style="left:886px;top:576px;width:90px;height:16px;background:#fff;border:1px solid #b4b4b4;border-left:2px solid #a0a0a0;box-sizing:border-box"></div>
<div class="r" style="left:984px;top:576px;width:16.7px;height:16px;background:#fff;border:1px solid #b4b4b4;box-sizing:border-box"></div>
<svg class="r" style="left:0;top:0" width="1024" height="622"><polygon points="880.5,580.5 880.5,587.5 875.5,584" fill="#222"/><polygon points="990,580.5 990,587.5 995,584" fill="#222"/><polygon points="1007.5,190.5 1016.5,190.5 1012,185.5" fill="#222"/><polygon points="1007.5,560.5 1016.5,560.5 1012,565.5" fill="#222"/><rect x="854.5" y="578" width="2.2" height="2.2" fill="#9a9a9a"/><rect x="854.5" y="583" width="2.2" height="2.2" fill="#9a9a9a"/><rect x="854.5" y="588" width="2.2" height="2.2" fill="#9a9a9a"/></svg>
<div class="t" style="left:13.59px;top:605px;font-size:11.9px;font-weight:400;color:#555;transform:scaleX(0.934);">Ready</div>
<div class="t" style="left:576.05px;top:605px;font-size:11.9px;font-weight:400;color:#444;transform:scaleX(0.971);">Display Settings</div>
<div class="r" style="left:680.5px;top:597px;width:44.5px;height:23.5px;background:#d2d2d2"></div>
<div class="t" style="left:972.13px;top:605px;font-size:11.9px;font-weight:400;color:#555;transform:scaleX(0.962);">100%</div>
<div class="r" style="left:834.5px;top:608.3px;width:110px;height:1.3px;background:#8a8a8a"></div>
<div class="r" style="left:887px;top:601.5px;width:6px;height:14.5px;background:#3a3a3a"></div>
<div class="r" style="left:819.5px;top:608.4px;width:8.5px;height:1.2px;background:#666"></div>
<svg class="r" style="left:0;top:0" width="1024" height="622"><path d="M949.5,609H958.5M954,604.5V613.5" stroke="#666" stroke-width="1.2"/></svg>
<svg class="r" style="left:0;top:0" width="1024" height="622" viewBox="0 0 1024 622"><g fill="none" stroke="#ffffff" stroke-width="1.3" stroke-linejoin="round"><path d="M25.6,12.7H33L38.6,18.3V29.5H25.6Z"/><path d="M33,12.7V18.3H38.6"/><path d="M54.6,26.6V14.8H60.6L62.6,16.8H68.6V19"/><path d="M54.6,26.6L57,19.2H71L68,26.6Z"/><path d="M86.8,12.6V19.4H93.5"/><path d="M87.6,18.4C91,13.5 96.5,11.8 100.2,15C104,18.4 102.8,22.5 99.5,25.5L92.2,29.6"/><path d="M110.4,18.2L113.2,21L116,18.2" stroke-width="1.1"/></g><g fill="none" stroke="#6aa383" stroke-width="1.2" stroke-linejoin="round"><path d="M144.3,12.6V19.4H137.4"/><path d="M143.5,18.4C140,13.5 134.5,11.8 130.8,15C127,18.4 128.2,22.5 131.5,25.5L138.3,29.6"/><path d="M152.9,18.2L155.6,20.9L158.4,18.2" stroke-width="1.1"/><path d="M184.4,12.6V29.5M180.9,26L184.4,29.6L187.9,26"/><path d="M215.8,12.6V29.5M212.3,26L215.8,29.6L219.3,26"/></g><g fill="#6aa383" font-family="Liberation Sans" font-size="9.6"><text x="170.3" y="19.8">A</text><text x="170.6" y="29.9">Z</text><text x="201.6" y="19.8">Z</text><text x="201.3" y="29.9">A</text></g><path d="M237.2,18.6L239.6,20.6L237.2,22.6M241.6,18.6L244,20.6L241.6,22.6" fill="none" stroke="#ffffff" stroke-width="1.5"/><path d="M432.5,19L438,24L443.5,19" fill="none" stroke="#ffffff" stroke-width="1.3"/><g fill="none" stroke="#ffffff" stroke-width="1.4"><circle cx="504" cy="17" r="5.2"/><path d="M500.2,20.8L494.8,26.8"/></g><g fill="none" stroke="#ffffff" stroke-width="1.2" stroke-linejoin="round"><path d="M734.6,18.7L738.7,13.2H747.6L751.7,18.7L743.1,28.3Z"/><path d="M734.6,18.7H751.7M740.8,13.2L738.8,18.7L743.1,28.3L747.4,18.7L745.5,13.2"/><path d="M786.5,26.9L796.1,14.6L801.6,20L790.6,29.6Z"/><path d="M792.8,27.5A2.2,2.2 0 0 0 796.6,25.2"/><path d="M797.5,12.5L798.8,10.5M800.8,15L803.2,12.8M802.8,18.2H805"/><rect x="837.9" y="14" width="14.4" height="10.9"/><path d="M837.9,16.8H852.3M845.1,24.8V19M842.6,21.2L845.1,18.7L847.6,21.2"/><path d="M889.7,19.3H902"/><rect x="940.7" y="13.5" width="11.9" height="11.7" rx="2"/><path d="M991.2,14L1003.2,25.8M1003.2,14L991.2,25.8"/></g><g fill="none" stroke="#1e6e42" stroke-width="1.3" stroke-linejoin="round"><path d="M889,50.2H900.8V58.2H893.6L890.8,61V58.2H889Z"/><path d="M942.8,55.5V61.5H935.8V54.2"/><path d="M938.6,59C939.5,54.8 942.5,52.8 947.5,53.2M945.3,50.3L948.5,53.2L945.3,56.2"/><path d="M960.2,54.5L963.2,57.5L966.2,54.5" stroke-width="1.1"/></g><g fill="none" stroke="#333" stroke-width="1.3" stroke-linejoin="round"><path d="M993,48V47.5H1006V57H1001L998.5,59.5"/><circle cx="994.5" cy="55" r="3.8" fill="#f3f2f1"/><path d="M988.3,64.8C988.8,60.5 991,59 994.5,59C998,59 1000.2,60.5 1000.7,64.8"/></g><rect x="27.5" y="94.6" width="9" height="18.6" fill="#7db4e6" stroke="#2b78c5" stroke-width="1"/><rect x="36.5" y="82.5" width="9.2" height="30.7" fill="#fafafa" stroke="#505050" stroke-width="1"/><rect x="45.7" y="88.2" width="8.8" height="25" fill="#c8c8c8" stroke="#505050" stroke-width="1"/><rect x="42" y="98" width="18" height="18" fill="#f3f2f1" transform="" opacity="0"/><path d="M43.5,107.2H59.7M51.2,99V115.5" stroke="#f3f2f1" stroke-width="4"/><path d="M43,107.2H59.7M51.2,98.8V115.5" stroke="#2f9e4c" stroke-width="1.6"/><rect x="92.3" y="82.4" width="19.8" height="4.2" rx="0.8" fill="#5b9bd5" stroke="#2b78c5" stroke-width="1"/><g stroke="#4a90d9" stroke-width="1"><path d="M87.7,90.2H117.7"/><path d="M87.7,94.8H117.7"/><path d="M87.7,99.3H117.7"/><path d="M87.7,103.7H117.7"/><path d="M87.7,108.2H117.7"/></g><rect x="93.8" y="99.2" width="5.6" height="13.6" fill="#fff" stroke="#505050" stroke-width="1"/><rect x="99.4" y="92.2" width="5.8" height="20.6" fill="#c8c8c8" stroke="#505050" stroke-width="1"/><rect x="105.2" y="103.8" width="5.6" height="9" fill="#fff" stroke="#505050" stroke-width="1"/><path d="M87.2,85V113.2H117.8" fill="none" stroke="#505050" stroke-width="1.1"/><path d="M160.3,99.6C157.6,92 163.5,82.3 175,82.2C185.8,82.1 190.6,89.5 190.6,97C190.6,106.8 183.6,112.9 176.6,112.9C172.2,112.9 172,108.3 173.6,104.6C175.2,101 173.3,97.2 169.6,97.6C165.8,98 162.8,102.4 160.3,99.6Z" fill="#fafafa" stroke="#444" stroke-width="1.3"/><circle cx="167.3" cy="93.3" r="2.3" fill="#2f86d6"/><circle cx="173.9" cy="89.8" r="2.3" fill="#3a9d4f"/><circle cx="181.6" cy="92.1" r="2.3" fill="#e8740f"/><circle cx="183.9" cy="99.9" r="2.3" fill="#e8343b"/><circle cx="179.6" cy="106.6" r="2.3" fill="#8a2ea8"/><rect x="657.8" y="86" width="30.6" height="23.6" fill="#ededed" stroke="#a8a8a8" stroke-width="1.2"/><path d="M658.4,86.6H688V93.7H668.3V109.2H658.4Z" fill="#d2d2d2"/><path d="M668.3,86V109.8M678.5,86V109.8M657.8,93.7H688.4M657.8,101.8H688.4" stroke="#a8a8a8" stroke-width="1.1"/><path d="M671.5,84.2L660.5,96.5" stroke="#f3f2f1" stroke-width="4"/><path d="M666.2,80.4L670.6,84.3L666.2,88.2M655.4,91.2L660.1,96.2L664.9,91.2" fill="none" stroke="#a8a8a8" stroke-width="1.2"/><path d="M670.6,84.3L660.3,96" stroke="#a8a8a8" stroke-width="1.2"/><rect x="720.2" y="86" width="30.6" height="23.6" fill="#fafafa" stroke="#505050" stroke-width="1.1"/><path d="M730.2,86V109.8M740.8,86V109.8M720.2,93.7H750.8M720.2,101.8H750.8" stroke="#505050" stroke-width="1.1"/><rect x="720.2" y="86" width="20.6" height="15.8" fill="#7db4e6" stroke="#2b78c5" stroke-width="1.1"/><path d="M730.2,86.5V101.3M720.7,93.7H740.3" stroke="#cfe3f7" stroke-width="1"/><rect x="733.8" y="96.8" width="20.5" height="19.5" fill="#f3f2f1"/><rect x="735.6" y="106.2" width="5.6" height="9" fill="#c8c8c8" stroke="#505050" stroke-width="1"/><rect x="741.8" y="98.8" width="5.8" height="16.4" fill="#fafafa" stroke="#505050" stroke-width="1"/><rect x="747.8" y="101.4" width="4.8" height="13.8" fill="#7db4e6" stroke="#2b78c5" stroke-width="1"/><rect x="795" y="94.8" width="9.1" height="18.6" fill="#c8c8c8" stroke="#666" stroke-width="1"/><rect x="804.1" y="82.7" width="8.9" height="30.7" fill="#fafafa" stroke="#505050" stroke-width="1"/><rect x="813" y="88.5" width="8.8" height="24.9" fill="#7db4e6" stroke="#2b78c5" stroke-width="1.1"/><path d="M881.7,106H868.7V84H898.6V99.2" fill="#fafafa" stroke="#505050" stroke-width="1.1"/><path d="M878.1,84V106M888.8,84V99.2M868.7,91.5H898.6M868.7,99.2H888" fill="none" stroke="#505050" stroke-width="1.1"/><path d="M868.7,106V110.5H876.9L881.7,106Z" fill="#fafafa" stroke="#505050" stroke-width="1.1"/><path d="M883.2,116V105H888.2V97.2H902V116Z" fill="#f3f2f1"/><rect x="884.6" y="106.3" width="4.5" height="8.4" fill="#c8c8c8" stroke="#505050" stroke-width="1"/><rect x="889.6" y="98.6" width="5.8" height="16.1" fill="#fafafa" stroke="#505050" stroke-width="1.1"/><rect x="895.9" y="101.1" width="4.9" height="13.6" fill="#7db4e6" stroke="#2b78c5" stroke-width="1.1"/><g fill="none" stroke="#444" stroke-width="1.1"><path d="M64.8,142.8L67.39999999999999,145.4L70.0,142.8"/><path d="M122.5,142.8L125.1,145.4L127.7,142.8"/><path d="M194.3,142.8L196.9,145.4L199.5,142.8"/></g><path d="M1003,174.2L1008.2,169.2L1013.4,174.2" fill="none" stroke="#333" stroke-width="1.3"/><path d="M601.9,92.7L605.2,89.7L608.5,92.7M601.9,112.3L605.2,115.6L608.5,112.3" fill="none" stroke="#a0a0a0" stroke-width="1.1"/><path d="M601.3,131H609M601.9,134.3L605.2,137.3L608.5,134.3" fill="none" stroke="#333" stroke-width="1.5"/><path d="M869.1,272L877.6,265.2C878.8,264.4 879.3,265.6 878.6,266.4L871.3,274.4Z" fill="#fff" stroke="#444" stroke-width="1.1"/><path d="M860.2,277.6C864,277.6 866.2,274.2 869.4,272.6C871,272 871.8,274.4 870.9,276C869.6,278.6 866.4,279.8 863.2,279.2C861.8,279 860.6,278.4 860.2,277.6Z" fill="#6aaee8" stroke="#2f80d2" stroke-width="1"/><g fill="none" stroke="#444" stroke-width="1.1"><path d="M68.5,614.5V603H83.5V608"/><path d="M68.5,606H83.5M71,609H74M71,611.5H74"/><circle cx="79.5" cy="612" r="3.6"/><circle cx="79.5" cy="612" r="1.5" fill="#444"/><path d="M559.2,612.5V602.6H574.2V605.5M559.2,612.5H564"/><circle cx="568.5" cy="611.5" r="2.6"/><path d="M568.5,607.2V608.2M568.5,614.8V615.8M564.2,611.5H565.2M571.8,611.5H572.8M565.5,608.5L566.2,609.2M570.8,613.8L571.5,614.5M565.5,614.5L566.2,613.8M570.8,609.2L571.5,608.5"/></g><g fill="none" stroke="#505050" stroke-width="1.3"><rect x="695" y="602" width="14" height="13.6"/><path d="M699.7,602V615.6M704.3,602V615.6M695,606.5H709M695,611H709"/><rect x="739.6" y="602.3" width="15" height="13.4"/><rect x="742.8" y="605" width="8.6" height="8"/><path d="M744.5,607.2H749.8M744.5,609H749.8M744.5,610.8H749.8" stroke-width="0.8"/><rect x="784.4" y="602.4" width="14" height="13.2"/><path d="M784.4,609.7H793.3V602.4M788.8,602.4V609.7"/></g></svg>
</body></html>
